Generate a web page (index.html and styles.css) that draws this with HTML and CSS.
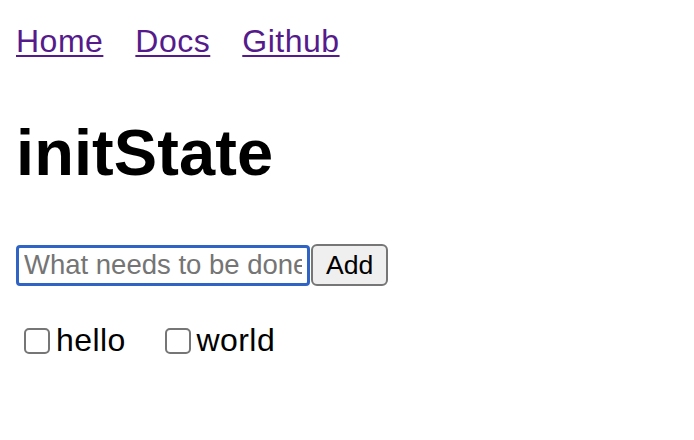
FILE: index.html
```html
<!DOCTYPE html>
<html>
<head>
<meta charset="utf-8">
<link rel="stylesheet" href="styles.css">
</head>
<body>
<nav class="nav">
  <a href="#" class="nav-link">Home</a>
  <a href="#" class="nav-link">Docs</a>
  <a href="#" class="nav-link">Github</a>
</nav>
<h1 class="title">initState</h1>
<form class="todo-form">
  <input class="todo-input" type="text" placeholder="What needs to be done?">
  <button class="todo-add" type="button">Add</button>
</form>
<ul class="todo-list">
  <li class="todo-item"><input class="todo-check" type="checkbox"><span class="todo-text">hello</span></li>
  <li class="todo-item"><input class="todo-check" type="checkbox"><span class="todo-text">world</span></li>
</ul>
</body>
</html>
```
FILE: styles.css
```css
html, body {
  background: #ffffff;
}
body {
  margin: 16px;
  font-family: "Liberation Sans", Arial, Helvetica, sans-serif;
  font-size: 32px;
  color: #000000;
}
.nav {
  display: flex;
  gap: 32px;
  padding-top: 7px;
}
.nav-link {
  color: #551a8b;
  letter-spacing: 0.5px;
  text-decoration: underline;
  text-underline-offset: 3px;
  text-decoration-thickness: 2px;
}
.title {
  font-size: 65px;
  font-weight: bold;
  letter-spacing: 0.1px;
  margin: 56px 0 54px;
  line-height: 74px;
}
.todo-form {
  display: flex;
  align-items: center;
  margin: 0;
}
.todo-input {
  box-sizing: border-box;
  width: 294px;
  height: 41px;
  margin: 0;
  padding: 2px 5px;
  border: 3px solid #2f63c4;
  border-radius: 4px;
  outline: none;
  font-family: "Liberation Sans", Arial, sans-serif;
  font-size: 27.5px;
  color: #000;
  background: #fff;
}
.todo-input::placeholder {
  color: #757575;
}
.todo-add {
  box-sizing: border-box;
  height: 42px;
  margin: 0 0 0 1px;
  padding: 0 13px;
  border: 2px solid #767676;
  border-radius: 6px;
  background: #efefef;
  font-family: "Liberation Sans", Arial, sans-serif;
  font-size: 26.6px;
  color: #000;
}
.todo-list {
  list-style: none;
  margin: 36px 0 0;
  padding: 0;
  display: flex;
  gap: 31px;
}
.todo-item {
  display: flex;
  align-items: center;
}
.todo-text {
  letter-spacing: 0.4px;
}
.todo-check {
  appearance: none;
  -webkit-appearance: none;
  box-sizing: border-box;
  width: 26px;
  height: 26px;
  margin: 0 6px 0 8px;
  border: 2px solid #767676;
  border-radius: 5px;
  background: #fff;
}
```
